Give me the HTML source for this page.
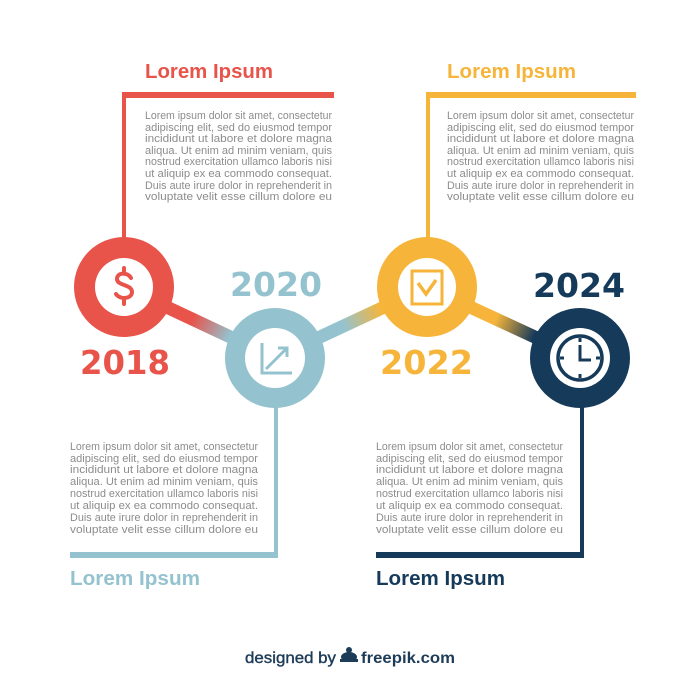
<!DOCTYPE html>
<html><head><meta charset="utf-8"><style>
html,body{margin:0;padding:0;background:#fff}
svg{display:block}
.t{font-family:"Liberation Sans",sans-serif;font-size:11px;fill:#8c8c8c}
.h{font-family:"Liberation Sans",sans-serif;font-weight:bold;font-size:20.5px}
.y{font-family:"DejaVu Sans",sans-serif;font-weight:bold;font-size:33px}
</style></head><body>
<svg width="700" height="700" viewBox="0 0 700 700" xmlns="http://www.w3.org/2000/svg">
<defs>
<linearGradient id="g1" x1="124" y1="287" x2="275" y2="358" gradientUnits="userSpaceOnUse"><stop offset="0.45" stop-color="#e8534a"/><stop offset="0.7" stop-color="#94c3cf"/></linearGradient>
<linearGradient id="g2" x1="275" y1="358" x2="427" y2="287" gradientUnits="userSpaceOnUse"><stop offset="0.45" stop-color="#94c3cf"/><stop offset="0.7" stop-color="#f6b53a"/></linearGradient>
<linearGradient id="g3" x1="427" y1="287" x2="580" y2="358" gradientUnits="userSpaceOnUse"><stop offset="0.45" stop-color="#f6b53a"/><stop offset="0.7" stop-color="#163a5a"/></linearGradient>
</defs>
<rect x="122" y="92" width="212" height="6" fill="#e8534a"/>
<rect x="122" y="92" width="4" height="150" fill="#e8534a"/>
<rect x="426" y="92" width="210" height="6" fill="#f6b53a"/>
<rect x="426" y="92" width="4" height="150" fill="#f6b53a"/>
<rect x="70" y="552" width="208" height="6" fill="#94c3cf"/>
<rect x="274" y="400" width="4" height="158" fill="#94c3cf"/>
<rect x="376" y="552" width="208" height="6" fill="#163a5a"/>
<rect x="580" y="400" width="4" height="158" fill="#163a5a"/>
<line x1="124" y1="287" x2="275" y2="358" stroke="url(#g1)" stroke-width="13"/>
<line x1="275" y1="358" x2="427" y2="287" stroke="url(#g2)" stroke-width="13"/>
<line x1="427" y1="287" x2="580" y2="358" stroke="url(#g3)" stroke-width="13"/>
<circle cx="124" cy="287" r="50" fill="#e8534a"/><circle cx="124" cy="287" r="29" fill="#fff"/>
<circle cx="275" cy="358" r="50" fill="#94c3cf"/><circle cx="275" cy="358" r="30" fill="#fff"/>
<circle cx="427" cy="287" r="50" fill="#f6b53a"/><circle cx="427" cy="287" r="29" fill="#fff"/>
<circle cx="580" cy="358" r="50" fill="#163a5a"/><circle cx="580" cy="358" r="30" fill="#fff"/>
<path d="M131 278 C128 272 117 272 117 279 C117 286 132 284 132 292 C132 299 120 300 116 294 M124 268 V273 M124 299 V304" stroke="#e8534a" stroke-width="4" fill="none" stroke-linecap="round"/>
<path d="M262 343 V373 H292 M266 369 L287 348 M278 348 H287 V357" stroke="#94c3cf" stroke-width="3" fill="none"/>
<rect x="412" y="271" width="30" height="33" fill="none" stroke="#f6b53a" stroke-width="3"/>
<path d="M418 283 L426 294 L436 280" stroke="#f6b53a" stroke-width="3.5" fill="none"/>
<circle cx="580" cy="358" r="22" fill="none" stroke="#163a5a" stroke-width="3.5"/>
<path d="M580 345 V360 H591 M580 338 V342 M580 374 V378 M560 358 H564 M596 358 H600" stroke="#163a5a" stroke-width="3" fill="none"/>
<text class="y" x="80" y="374" fill="#e8534a" textLength="90" lengthAdjust="spacingAndGlyphs">2018</text>
<text class="y" x="230" y="296" fill="#94c3cf" textLength="92" lengthAdjust="spacingAndGlyphs">2020</text>
<text class="y" x="380" y="374" fill="#f6b53a" textLength="93" lengthAdjust="spacingAndGlyphs">2022</text>
<text class="y" x="533" y="297" fill="#163a5a" textLength="92" lengthAdjust="spacingAndGlyphs">2024</text>
<text class="h" x="145" y="78" fill="#e8534a" textLength="128" lengthAdjust="spacingAndGlyphs">Lorem Ipsum</text>
<text class="h" x="447" y="78" fill="#f6b53a" textLength="129" lengthAdjust="spacingAndGlyphs">Lorem Ipsum</text>
<text class="h" x="70" y="585" fill="#94c3cf" textLength="130" lengthAdjust="spacingAndGlyphs">Lorem Ipsum</text>
<text class="h" x="376" y="585" fill="#163a5a" textLength="129" lengthAdjust="spacingAndGlyphs">Lorem Ipsum</text>
<g class="t">
<text x="145" y="119" textLength="187" lengthAdjust="spacingAndGlyphs">Lorem ipsum dolor sit amet, consectetur</text>
<text x="145" y="131" textLength="187" lengthAdjust="spacingAndGlyphs">adipiscing elit, sed do eiusmod tempor</text>
<text x="145" y="142" textLength="187" lengthAdjust="spacingAndGlyphs">incididunt ut labore et dolore magna</text>
<text x="145" y="154" textLength="187" lengthAdjust="spacingAndGlyphs">aliqua. Ut enim ad minim veniam, quis</text>
<text x="145" y="165" textLength="187" lengthAdjust="spacingAndGlyphs">nostrud exercitation ullamco laboris nisi</text>
<text x="145" y="177" textLength="187" lengthAdjust="spacingAndGlyphs">ut aliquip ex ea commodo consequat.</text>
<text x="145" y="189" textLength="187" lengthAdjust="spacingAndGlyphs">Duis aute irure dolor in reprehenderit in</text>
<text x="145" y="200" textLength="187" lengthAdjust="spacingAndGlyphs">voluptate velit esse cillum dolore eu</text>
<text x="447" y="119" textLength="187" lengthAdjust="spacingAndGlyphs">Lorem ipsum dolor sit amet, consectetur</text>
<text x="447" y="131" textLength="187" lengthAdjust="spacingAndGlyphs">adipiscing elit, sed do eiusmod tempor</text>
<text x="447" y="142" textLength="187" lengthAdjust="spacingAndGlyphs">incididunt ut labore et dolore magna</text>
<text x="447" y="154" textLength="187" lengthAdjust="spacingAndGlyphs">aliqua. Ut enim ad minim veniam, quis</text>
<text x="447" y="165" textLength="187" lengthAdjust="spacingAndGlyphs">nostrud exercitation ullamco laboris nisi</text>
<text x="447" y="177" textLength="187" lengthAdjust="spacingAndGlyphs">ut aliquip ex ea commodo consequat.</text>
<text x="447" y="189" textLength="187" lengthAdjust="spacingAndGlyphs">Duis aute irure dolor in reprehenderit in</text>
<text x="447" y="200" textLength="187" lengthAdjust="spacingAndGlyphs">voluptate velit esse cillum dolore eu</text>
<text x="70" y="450" textLength="188" lengthAdjust="spacingAndGlyphs">Lorem ipsum dolor sit amet, consectetur</text>
<text x="70" y="462" textLength="188" lengthAdjust="spacingAndGlyphs">adipiscing elit, sed do eiusmod tempor</text>
<text x="70" y="473" textLength="188" lengthAdjust="spacingAndGlyphs">incididunt ut labore et dolore magna</text>
<text x="70" y="485" textLength="188" lengthAdjust="spacingAndGlyphs">aliqua. Ut enim ad minim veniam, quis</text>
<text x="70" y="497" textLength="188" lengthAdjust="spacingAndGlyphs">nostrud exercitation ullamco laboris nisi</text>
<text x="70" y="509" textLength="188" lengthAdjust="spacingAndGlyphs">ut aliquip ex ea commodo consequat.</text>
<text x="70" y="521" textLength="188" lengthAdjust="spacingAndGlyphs">Duis aute irure dolor in reprehenderit in</text>
<text x="70" y="533" textLength="188" lengthAdjust="spacingAndGlyphs">voluptate velit esse cillum dolore eu</text>
<text x="376" y="450" textLength="187" lengthAdjust="spacingAndGlyphs">Lorem ipsum dolor sit amet, consectetur</text>
<text x="376" y="462" textLength="187" lengthAdjust="spacingAndGlyphs">adipiscing elit, sed do eiusmod tempor</text>
<text x="376" y="473" textLength="187" lengthAdjust="spacingAndGlyphs">incididunt ut labore et dolore magna</text>
<text x="376" y="485" textLength="187" lengthAdjust="spacingAndGlyphs">aliqua. Ut enim ad minim veniam, quis</text>
<text x="376" y="497" textLength="187" lengthAdjust="spacingAndGlyphs">nostrud exercitation ullamco laboris nisi</text>
<text x="376" y="509" textLength="187" lengthAdjust="spacingAndGlyphs">ut aliquip ex ea commodo consequat.</text>
<text x="376" y="521" textLength="187" lengthAdjust="spacingAndGlyphs">Duis aute irure dolor in reprehenderit in</text>
<text x="376" y="533" textLength="187" lengthAdjust="spacingAndGlyphs">voluptate velit esse cillum dolore eu</text>
</g>
<text x="245" y="663" font-family="Liberation Sans,sans-serif" font-size="16" fill="#1d3c58" stroke="#1d3c58" stroke-width="0.4" textLength="91" lengthAdjust="spacingAndGlyphs">designed by</text>
<g fill="#1d3c58"><ellipse cx="349" cy="657" rx="8" ry="5"/><circle cx="349" cy="650" r="3"/><rect x="340" y="659" width="18" height="3"/></g>
<text x="361" y="663" font-family="Liberation Sans,sans-serif" font-size="16" font-weight="bold" fill="#1d3c58" textLength="94" lengthAdjust="spacingAndGlyphs">freepik.com</text>
</svg>
</body></html>
